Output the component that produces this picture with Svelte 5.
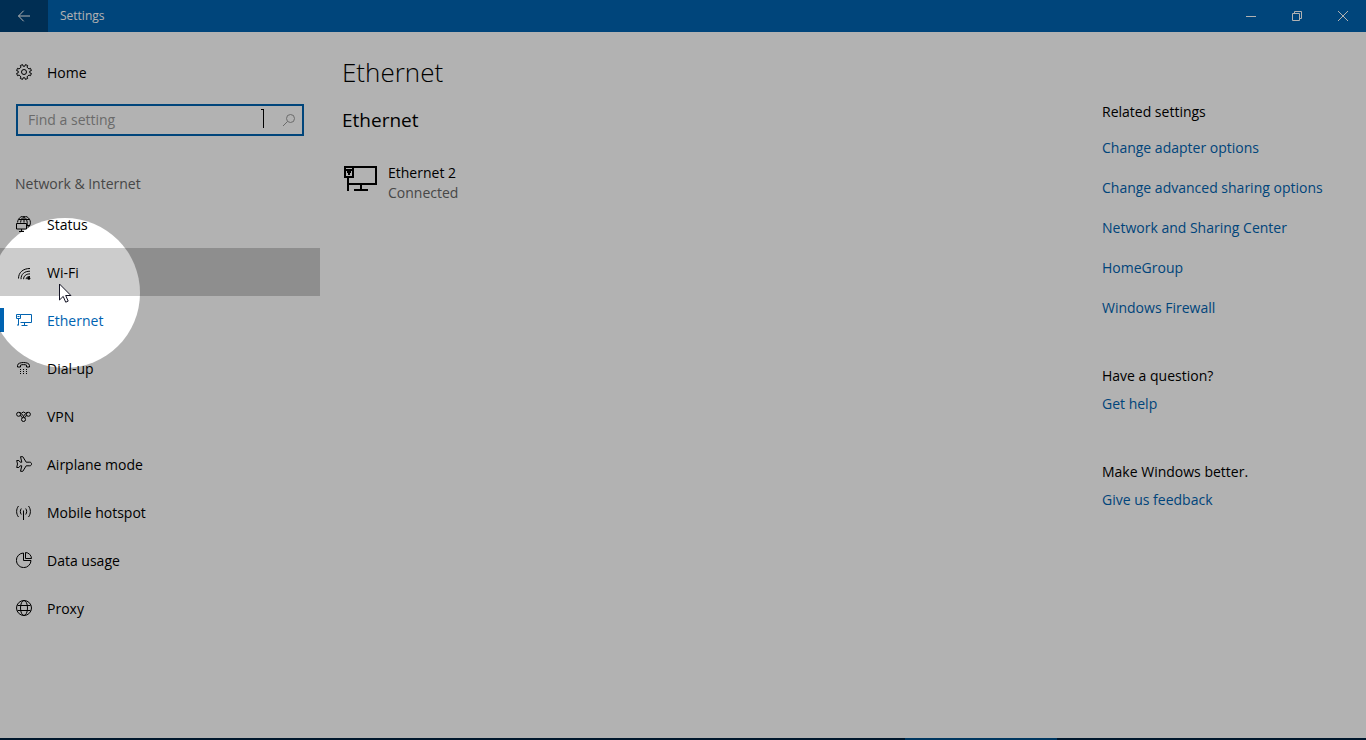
<script lang="ts">
  let query = $state("");
  let current = $state("Ethernet");
  let hovered = $state("Wi-Fi");

  const pages = [
    "Status",
    "Wi-Fi",
    "Ethernet",
    "Dial-up",
    "VPN",
    "Airplane mode",
    "Mobile hotspot",
    "Data usage",
    "Proxy"
  ];

  const related = [
    "Change adapter options",
    "Change advanced sharing options",
    "Network and Sharing Center",
    "HomeGroup",
    "Windows Firewall"
  ];
</script>

{#snippet pageIcon(name: string)}
  <svg class="icon" viewBox="0 0 16 16" aria-hidden="true">
    {#if name === "Status"}
      <path d="M1.600 6.500a6.400 6.400 0 1 1 9.900 5.400M4.600 6.500c.2-2.600 1.300-4.600 3.400-5.900 3 2.300 3.800 5.900 3 10M8 .6v6M2.500 3.500h11M11 9.500h3"/>
      <path d="M.5 7.500h10v5.500H.5zM5.500 13v2M3 15.500h5"/>
    {:else if name === "Wi-Fi"}
      <path d="M2.500 14.500C2.500 8.500 7 4.500 14 4.500M5 15.200C5 10 8.500 7.200 14 7.200M7.600 15.200c0-3.200 2.400-5.300 6.400-5.300M10.100 15.200c0-1.800 1.400-2.700 3.900-2.700"/>
      <circle class="solid" cx="12.800" cy="14.300" r="1.500"/>
    {:else if name === "Ethernet"}
      <path d="M4.500 2.500h11v8h-11M8.500 10.500v3M5.500 13.500h6M.5 2.500h4v4h-4zM2.500 6.500v6.500M1.500 4.500h2M1 13h2"/>
    {:else if name === "Dial-up"}
      <path d="M1.500 7V5.500c0-4 12-4 12 0V7h-3V5.200c-1.500-.8-4.500-.8-6 0V7z"/>
      <path class="solid" d="M4 9h1v1H4zM7 9h1v1H7zM10 9h1v1h-1zM4 11h1v1H4zM7 11h1v1H7zM10 11h1v1h-1zM4 13h1v1H4zM7 13h1v1H7zM10 13h1v1h-1z"/>
    {:else if name === "VPN"}
      <circle cx="2.600" cy="6.300" r="2"/>
      <circle cx="12.400" cy="6.300" r="2"/>
      <circle cx="7.500" cy="11.500" r="2"/>
      <path d="M3 4.300c2.400 0 3 2.500 5.500 5.400M12 4.300c-2.400 0-3 2.500-5.500 5.400M4.500 7l1.300 2.500M10.500 7 9.200 9.500M5.500 5l2-1 2 1"/>
    {:else if name === "Airplane mode"}
      <path d="M4.500.7h2.300l3.400 5.500h3.600c2.300 0 2.300 3.600 0 3.600h-3.600l-3.400 5.500H4.500l1.300-5.500H4.200l-1.300 1.700H.7L1.500 8 .7 4.500h2.200l1.300 1.700h1.600z"/>
    {:else if name === "Mobile hotspot"}
      <path d="M7.500 6.500V16M5.300 4.500c-1.300 1.800-1.300 4.200 0 6M9.700 4.500c1.300 1.800 1.300 4.200 0 6M2.500 2c-2.500 3.200-2.500 7.800 0 11M12.500 2c2.500 3.200 2.500 7.800 0 11"/>
    {:else if name === "Data usage"}
      <path d="M7.500 1A7.300 7.300 0 1 0 15 8.500H7.500zM9.500.5v6h6a6.200 6.200 0 0 0-6-6z"/>
    {:else if name === "Proxy"}
      <circle cx="8" cy="8" r="7.500"/>
      <ellipse cx="8" cy="8" rx="3.500" ry="7.500"/>
      <path d="M1.500 5.500h13M1.500 10.500h13"/>
    {/if}
  </svg>
{/snippet}

<div class="window">
  <header class="titlebar">
    <button class="titlebar__back" aria-label="Back">
      <svg width="14" height="12" viewBox="0 0 14 12"><path d="M13 6H1.500M6.700.7 1.500 6l5.200 5.300"/></svg>
    </button>
    <span class="titlebar__title">Settings</span>
    <button class="titlebar__control" aria-label="Minimize">
      <svg width="12" height="12" viewBox="0 0 12 12"><path d="M1 6.500h10"/></svg>
    </button>
    <button class="titlebar__control" aria-label="Restore">
      <svg width="12" height="12" viewBox="0 0 12 12"><path d="M1.500 3.500h7v7h-7zM3.500 3.500v-2h7v7h-2"/></svg>
    </button>
    <button class="titlebar__control" aria-label="Close">
      <svg width="12" height="12" viewBox="0 0 12 12"><path d="m1 1 10 10M11 1 1 11"/></svg>
    </button>
  </header>

  <div class="body">
    <nav class="sidebar">
      <a class="nav-item" href="#home">
        <svg class="icon" viewBox="0 0 16 16" aria-hidden="true">
          <path d="m6.600.6.500 1.600h1.800L9.400.6l2.300.9-.7 1.600L12.900 5l1.600-.7.9 2.300-1.600.5v1.800l1.600.5-.9 2.300-1.600-.7L11 12.900l.7 1.600-2.300.9-.5-1.600H7.100l-.5 1.600-2.300-.9.700-1.600L3.100 11l-1.600.7-.9-2.300 1.600-.5V7.100L.6 6.600l.9-2.300 1.600.7L5 3.100l-.7-1.600z"/>
          <circle cx="8" cy="8" r="2.500"/>
        </svg>
        <span class="nav-item__label">Home</span>
      </a>

      <div class="search">
        <input class="search__input" type="text" placeholder="Find a setting" aria-label="Find a setting" bind:value={query}>
        <button class="search__button" aria-label="Search">
          <svg width="14" height="14" viewBox="0 0 14 14"><circle cx="8.500" cy="5.500" r="4"/><path d="M5.500 8.500 1 13"/></svg>
        </button>
        <svg class="search__beam" width="4" height="20" viewBox="0 0 4 20" aria-hidden="true"><path d="M0 .5h3M2.500 0v19"/></svg>
      </div>

      <h2 class="sidebar__heading">Network &amp; Internet</h2>
      <ul class="list">
        {#each pages as page}
          <li>
            <a
              class="nav-item"
              class:current={page === current}
              class:hovered={page === hovered}
              href="#{page}"
              onclick={() => (current = page)}
              onmouseenter={() => (hovered = page)}
            >
              {@render pageIcon(page)}
              <span class="nav-item__label">{page}</span>
            </a>
          </li>
        {/each}
      </ul>
    </nav>

    <main class="content">
      <h1>Ethernet</h1>
      <h2>Ethernet</h2>
      <a class="adapter" href="#ethernet-2">
        <svg width="36" height="30" viewBox="0 0 36 30" aria-hidden="true">
          <path d="M11 3h23v17H7M19 20v6M12 26h14M3 3h8v10H3zM6 13v14M3 6h8"/>
          <path class="solid" d="M5 7h4v2H8v2H6V9H5z"/>
        </svg>
        <span class="adapter__text">
          <span>Ethernet 2</span>
          <span class="adapter__state">Connected</span>
        </span>
      </a>
    </main>

    <aside class="related">
      <h3>Related settings</h3>
      <ul class="list related__links">
        {#each related as link}
          <li><a href="#{link}">{link}</a></li>
        {/each}
      </ul>
      <h3>Have a question?</h3>
      <a href="#help">Get help</a>
      <h3 class="related__feedback">Make Windows better.</h3>
      <a href="#feedback">Give us feedback</a>
    </aside>
  </div>

  <footer class="taskbar"><span class="taskbar__active"></span></footer>

  <div class="spotlight"></div>
  <svg class="pointer" width="14" height="21" viewBox="0 0 14 21" aria-hidden="true">
    <path d="M1.500 1v16l3.700-3.600 2.500 5.800 2.500-1.100-2.500-5.600h5.200z"/>
  </svg>
</div>

<style>
  :global(body) {
    margin: 0;
  }

  .window {
    position: relative;
    display: flex;
    flex-direction: column;
    min-height: 100vh;
    overflow: hidden;
    font: 14px/20px "Segoe UI", "Open Sans", "Noto Sans", sans-serif;
    color: #000;
    background: #fff;
  }

  svg {
    flex: none;
    fill: none;
    stroke: currentColor;
  }

  .solid {
    fill: currentColor;
    stroke: none;
  }

  a {
    color: #0063b1;
    text-decoration: none;
  }

  button {
    display: flex;
    align-items: center;
    justify-content: center;
    padding: 0;
    border: 0;
    color: inherit;
    background: none;
  }

  h1, h2, h3 {
    margin: 0;
    font-weight: 400;
  }

  .list {
    margin: 0;
    padding: 0;
    list-style: none;
  }

  .titlebar {
    display: flex;
    height: 32px;
    color: #fff;
    background: #0063b1;
  }

  .titlebar__back {
    width: 48px;
    background: #004277;
  }

  .titlebar__title {
    flex: 1;
    padding-left: 12px;
    font-size: 12px;
    line-height: 32px;
  }

  .titlebar__control {
    width: 46px;
  }

  .body {
    display: flex;
    flex: 1;
  }

  .sidebar {
    width: 320px;
    padding-top: 16px;
  }

  .nav-item {
    display: flex;
    align-items: center;
    gap: 15px;
    height: 48px;
    padding: 0 16px;
    box-sizing: border-box;
    color: #000;
  }

  .nav-item__label {
    padding-top: 2px;
  }

  .icon {
    width: 16px;
    height: 16px;
  }

  .hovered {
    background: #ccc;
  }

  .current {
    color: #0063b1;
    background: linear-gradient(#0063b1, #0063b1) left center / 4px 24px no-repeat;
  }

  .search {
    position: relative;
    display: flex;
    height: 32px;
    margin: 8px 16px 32px;
    box-sizing: border-box;
    border: 2px solid #0063b1;
  }

  .search__input {
    flex: 1;
    min-width: 0;
    padding: 0 10px;
    border: 0;
    outline: 0;
    font: inherit;
    background: none;
  }

  .search__input::placeholder {
    color: #999;
    opacity: 1;
  }

  .search__button {
    width: 26px;
    color: #999;
  }

  .search__beam {
    position: absolute;
    top: 3px;
    right: 37px;
  }

  .sidebar__heading {
    padding-left: 15px;
    font-size: 14px;
    line-height: 32px;
    color: #666;
  }

  .content {
    flex: 1;
    padding: 24px 22px;
  }

  .content h1 {
    font-size: 26px;
    font-weight: 300;
    line-height: 32px;
  }

  .content h2 {
    margin-top: 20px;
    font-size: 19px;
    line-height: 24px;
  }

  .adapter {
    display: flex;
    gap: 10px;
    margin-top: 31px;
    color: #000;
  }

  .adapter svg {
    margin-top: 1px;
    stroke-width: 2;
  }

  .adapter__text {
    display: flex;
    flex-direction: column;
  }

  .adapter__state {
    color: #666;
  }

  .related {
    width: 264px;
    padding-top: 70px;
  }

  .related a {
    display: inline-block;
  }

  .related h3 {
    margin-bottom: 8px;
    font-size: 14px;
  }

  .related__links {
    display: flex;
    flex-direction: column;
    gap: 20px;
    margin: 16px 0 48px;
  }

  .related .related__feedback {
    margin-top: 48px;
  }

  .taskbar {
    display: flex;
    justify-content: flex-end;
    height: 2px;
    background: #00223f;
  }

  .taskbar__active {
    width: 152px;
    margin-right: 309px;
    background: #00508a;
  }

  /* dims the window except for a circle round the pointer */
  .spotlight {
    position: absolute;
    top: 218px;
    left: -10px;
    width: 150px;
    height: 150px;
    border-radius: 50%;
    box-shadow: 0 0 0 2000px rgba(0, 0, 0, 0.3);
    pointer-events: none;
  }

  .pointer {
    position: absolute;
    top: 283px;
    left: 58px;
    fill: #fff;
    stroke: #112;
    pointer-events: none;
  }
</style>
